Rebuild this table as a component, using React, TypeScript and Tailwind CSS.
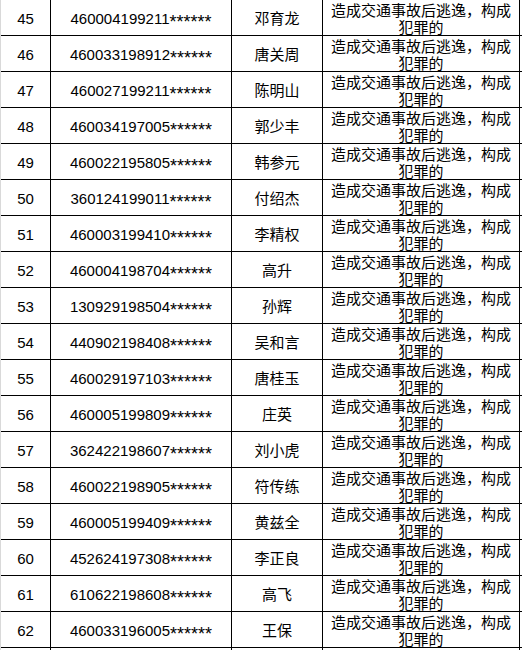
const rows: [string, string, string][] = [
  ["45", "460004199211", "邓育龙"],
  ["46", "460033198912", "唐关周"],
  ["47", "460027199211", "陈明山"],
  ["48", "460034197005", "郭少丰"],
  ["49", "460022195805", "韩参元"],
  ["50", "360124199011", "付绍杰"],
  ["51", "460003199410", "李精权"],
  ["52", "460004198704", "高升"],
  ["53", "130929198504", "孙辉"],
  ["54", "440902198408", "吴和言"],
  ["55", "460029197103", "唐桂玉"],
  ["56", "460005199809", "庄英"],
  ["57", "362422198607", "刘小虎"],
  ["58", "460022198905", "符传练"],
  ["59", "460005199409", "黄兹全"],
  ["60", "452624197308", "李正良"],
  ["61", "610622198608", "高飞"],
  ["62", "460033196005", "王保"],
];

const font = "font-['Liberation_Sans','Noto_Sans_CJK_SC',sans-serif]";

export default function App() {
  return (
    <div className={`w-[522px] h-[650px] overflow-hidden bg-white text-black text-[15px] ${font}`}>
      {rows.map(([no, id, name]) => (
        <div
          key={no}
          className="grid grid-cols-[51px_181px_91px_197px] h-[36px] border-b border-black"
        >
          <div className="flex items-center justify-center border-l border-l-[#d9d9d9] border-r border-black pt-[2px]">
            {no}
          </div>
          <div className="flex items-center justify-center border-r border-black pt-[2px]">
            <span className="whitespace-nowrap">
              {id}
              <span className="relative top-[4px] text-[18px] leading-none">******</span>
            </span>
          </div>
          <div className="flex items-center justify-center border-r border-black pt-[2px]">
            {name}
          </div>
          <div className="flex items-center justify-center border-r border-black pt-[2px] text-center leading-[17px] whitespace-nowrap">
            <span>
              造成交通事故后逃逸，构成
              <br />
              犯罪的
            </span>
          </div>
        </div>
      ))}
      <div className="grid grid-cols-[51px_181px_91px_197px] h-[36px]">
        <div className="border-l border-l-[#d9d9d9] border-r border-black" />
        <div className="border-r border-black" />
        <div className="border-r border-black" />
        <div className="border-r border-black" />
      </div>
    </div>
  );
}
